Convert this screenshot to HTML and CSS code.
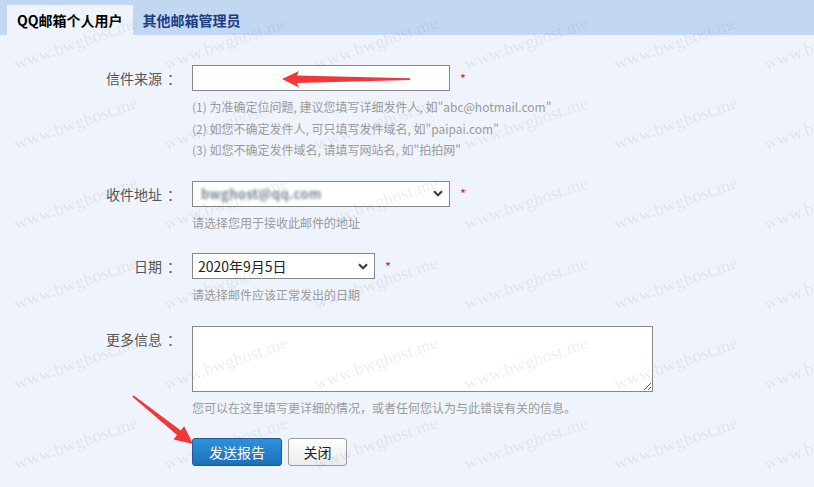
FILE: index.html
```html
<!DOCTYPE html>
<html lang="zh-CN">
<head>
    <meta charset="UTF-8">
    <title>举报邮件 - 信件来源</title>
    <link rel="stylesheet" href="styles.css">
</head>
<body>
    <div class="tabs">
        <div class="tab active">QQ邮箱个人用户</div>
        <div class="tab">其他邮箱管理员</div>
    </div>

    <form class="report" onsubmit="return false">
        <div class="row">
            <label class="row-label" for="sender">信件来源<span class="colon">：</span></label>
            <div class="row-field">
                <div class="line">
                    <input type="text" id="sender" class="text-input">
                    <span class="req">*</span>
                </div>
                <div class="hint">
                    (1) 为准确定位问题, 建议您填写详细发件人, 如"abc@hotmail.com"<br>
                    (2) 如您不确定发件人, 可只填写发件域名, 如"paipai.com"<br>
                    (3) 如您不确定发件域名, 请填写网站名, 如"拍拍网"
                </div>
            </div>
        </div>

        <div class="row">
            <label class="row-label">收件地址<span class="colon">：</span></label>
            <div class="row-field">
                <div class="line">
                    <div class="select address">
                        <span class="blurred">bwghost@qq.com</span>
                        <svg class="chevron" width="10" height="7" viewBox="0 0 10 7"><path d="M1 1.2 L5 5.2 L9 1.2" fill="none" stroke="#3c3c3c" stroke-width="2.2"/></svg>
                    </div>
                    <span class="req">*</span>
                </div>
                <div class="hint">请选择您用于接收此邮件的地址</div>
            </div>
        </div>

        <div class="row">
            <label class="row-label">日期<span class="colon">：</span></label>
            <div class="row-field">
                <div class="line">
                    <div class="select date">
                        <span class="select-value">2020年9月5日</span>
                        <svg class="chevron" width="10" height="7" viewBox="0 0 10 7"><path d="M1 1.2 L5 5.2 L9 1.2" fill="none" stroke="#3c3c3c" stroke-width="2.2"/></svg>
                    </div>
                    <span class="req">*</span>
                </div>
                <div class="hint">请选择邮件应该正常发出的日期</div>
            </div>
        </div>

        <div class="row">
            <label class="row-label" for="more">更多信息<span class="colon">：</span></label>
            <div class="row-field">
                <textarea id="more" class="more-input"></textarea>
                <div class="hint">您可以在这里填写更详细的情况，或者任何您认为与此错误有关的信息。</div>
            </div>
        </div>

        <div class="row">
            <div class="row-label"></div>
            <div class="row-field buttons">
                <button class="btn btn-primary">发送报告</button>
                <button class="btn btn-default">关闭</button>
            </div>
        </div>
    </form>

    <!-- annotation arrows -->
    <svg class="arrows" width="814" height="487" viewBox="0 0 814 487">
        <polygon points="282,79 299,71 297,75.5 410,78.2 410,80 297,83 299,87.5" fill="#f0383b"/>
        <polygon points="133.5,395.2 180.8,430.4 184.2,426.2 193,444 173.6,439.4 177,435 132.4,396.8" fill="#f0383b"/>
    </svg>

    <div class="watermark" id="watermark"></div>

    <script>
        const watermark = document.getElementById('watermark');
        for (let i = 0; i < 42; i++) {
            const cell = document.createElement('div');
            cell.className = 'mark';
            cell.innerHTML = '<span>www.bwghost.me</span>';
            watermark.appendChild(cell);
        }
    </script>
</body>
</html>
```

FILE: styles.css
```css
body {
    font-family: "Noto Sans CJK SC", "Noto Sans", sans-serif;
    margin: 0;
    width: 814px;
    height: 487px;
    overflow: hidden;
    position: relative;
    background: #eff4fc;
    color: #333;
}
.tabs {
    height: 35px;
    background: #c2d8f2;
    display: flex;
    align-items: flex-end;
    padding-left: 7px;
    box-sizing: border-box;
}
.tab {
    height: 30px;
    line-height: 30px;
    padding: 0 10px;
    font-size: 14px;
    font-weight: bold;
    color: #1d3d80;
}
.tab.active {
    background: #eff4fc;
    color: #000;
}
.report {
    padding-top: 30px;
}
.row {
    display: grid;
    grid-template-columns: 178px 1fr;
    column-gap: 14px;
}
.row + .row {
    margin-top: 20px;
}
.row-label {
    height: 26px;
    line-height: 26px;
    font-size: 14px;
    color: #555;
    text-align: right;
}
.colon {
    display: inline-block;
    padding-left: 5px;
    margin-right: -3px;
}
.line {
    display: flex;
    align-items: center;
    height: 26px;
}
.text-input, .select, .more-input {
    box-sizing: border-box;
    border: 1px solid #878787;
    background: #fff;
    margin: 0;
    font-family: inherit;
}
.text-input {
    width: 258px;
    height: 26px;
    padding: 0 4px;
}
.select {
    height: 26px;
    display: flex;
    align-items: center;
    justify-content: space-between;
    padding: 0 6px 0 5px;
}
.select.address {
    width: 258px;
    padding-left: 8px;
}
.select.date {
    width: 183px;
}
.select-value {
    font-size: 14px;
    color: #222;
}
.blurred {
    font-size: 13px;
    font-weight: bold;
    color: #7e8794;
    filter: blur(1.4px);
    letter-spacing: 0.3px;
}
.req {
    color: #f2202a;
    font-size: 13px;
    margin-left: 10px;
    line-height: 1;
}
.hint {
    margin-top: 5px;
    font-size: 12px;
    line-height: 21.5px;
    color: #9a9a9a;
}
.more-input {
    display: block;
    width: 461px;
    height: 66px;
    resize: both;
}
.buttons {
    display: flex;
    gap: 6px;
}
.btn {
    height: 28px;
    border-radius: 3px;
    font-family: inherit;
    font-size: 14px;
    padding: 0;
    cursor: pointer;
}
.btn-primary {
    width: 90px;
    color: #fff;
    border: 1px solid #1b5a93;
    background: linear-gradient(#2d92de, #1b6fba);
}
.btn-default {
    width: 59px;
    color: #222;
    border: 1px solid #9c9c9c;
    background: linear-gradient(#ffffff, #ececec);
}
.arrows {
    position: absolute;
    left: 0;
    top: 0;
    pointer-events: none;
}
.watermark {
    position: absolute;
    left: 1px;
    top: 3px;
    display: grid;
    grid-template-columns: repeat(6, 150px);
    grid-auto-rows: 80px;
    pointer-events: none;
}
.mark {
    display: flex;
    align-items: center;
    justify-content: center;
}
.mark span {
    font-family: "Liberation Serif", serif;
    font-size: 18px;
    color: rgba(95, 105, 125, 0.12);
    transform: rotate(-19deg);
    white-space: nowrap;
}
```
